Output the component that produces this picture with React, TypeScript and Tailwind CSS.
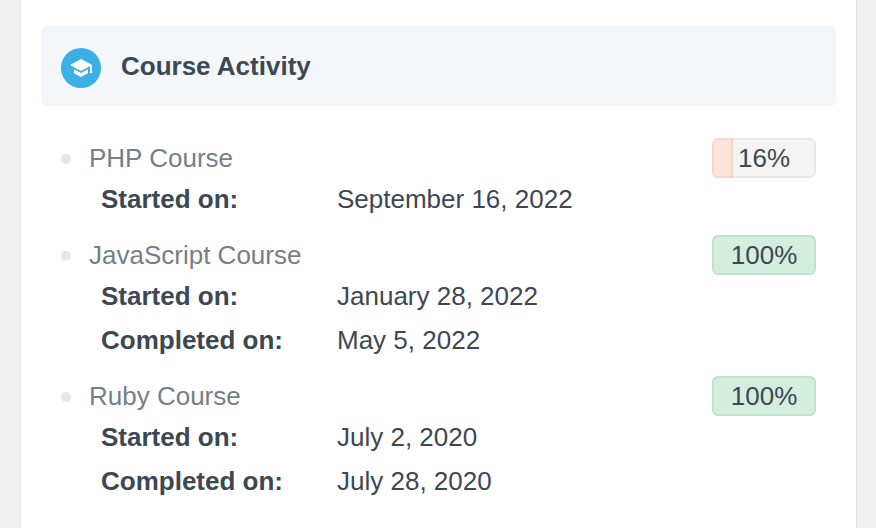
import { MdSchool } from "react-icons/md";

const courses: Course[] = [
  { name: "PHP Course", progress: 16, started: "September 16, 2022" },
  {
    name: "JavaScript Course",
    progress: 100,
    started: "January 28, 2022",
    completed: "May 5, 2022",
  },
  {
    name: "Ruby Course",
    progress: 100,
    started: "July 2, 2020",
    completed: "July 28, 2020",
  },
];

const ProgressBadge = ({ value }: { value: number }) => {
  const done = value === 100;

  return (
    <div className="relative h-10 w-[104px] shrink-0 overflow-hidden rounded-md bg-[#f4f4f4]">
      <div
        className={`h-full ${done ? "bg-[#d2eedd]" : "border-r-2 border-[#f3d7cd] bg-[#ffe4da]"}`}
        style={{ width: done ? "100%" : `calc(${value}% + 4px)` }}
      />
      {/* outline drawn over the fill, so that it tints whatever is below */}
      <div
        className={`absolute inset-0 flex items-center justify-center rounded-md border-2 ${
          done ? "border-[#c2e0cf]" : "border-black/5"
        }`}
      >
        {value}%
      </div>
    </div>
  );
};

const DateRow = ({ label, date }: { label: string; date: string }) => {
  return (
    <div className="flex h-11 items-start leading-[42px]">
      <dt className="w-[236px] shrink-0 font-bold">{label}</dt>
      <dd>{date}</dd>
    </div>
  );
};

const App = () => {
  return (
    <div className="min-h-screen bg-[#f0f0f0] pr-[19px] pl-5 font-['Liberation_Sans',Arial,sans-serif] text-[26px] leading-10 text-[#3d4852]">
      <main className="min-h-screen border-x border-[#e2e2e2] bg-white px-5 pt-[26px]">
        <header className="flex h-20 items-center gap-5 rounded-md bg-[#f3f7fa] px-5">
          <span className="mt-1 flex size-10 items-center justify-center rounded-full bg-[#3bb0e6] text-white">
            <MdSchool size={24} />
          </span>
          <h1 className="font-bold">Course Activity</h1>
        </header>

        <ul className="mt-8 flex flex-col gap-[13px] px-5">
          {courses.map((course) => (
            <li key={course.name}>
              <div className="flex items-center">
                <span className="mt-0.5 mr-[18px] size-2.5 rounded-full bg-[#e2e7e9]" />
                <h2 className="grow text-[#757f88]">{course.name}</h2>
                <ProgressBadge value={course.progress} />
              </div>
              <dl className="pl-10">
                <DateRow label="Started on:" date={course.started} />
                {course.completed && (
                  <DateRow label="Completed on:" date={course.completed} />
                )}
              </dl>
            </li>
          ))}
        </ul>
      </main>
    </div>
  );
};

export default App;

interface Course {
  name: string;
  progress: number;
  started: string;
  completed?: string;
}
